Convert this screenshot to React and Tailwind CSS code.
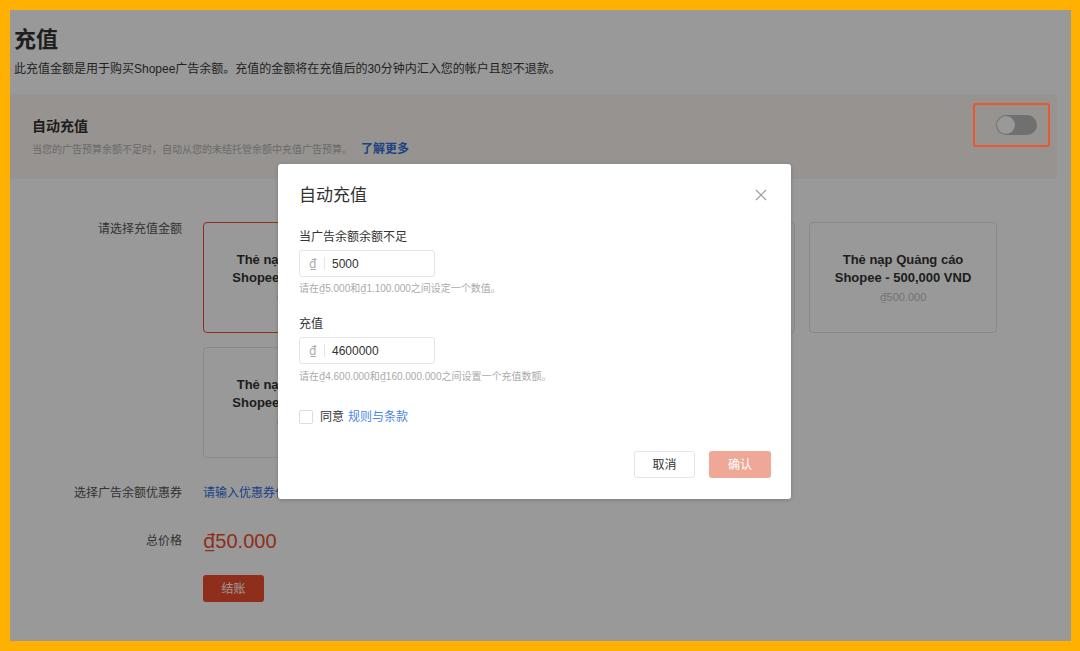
import React from 'react';

const cards = [
    { title: 'Thẻ nạp Quảng cáo Shopee - 50,000 VND', price: '50.000', active: true },
    { title: 'Thẻ nạp Quảng cáo Shopee - 100,000 VND', price: '100.000' },
    { title: 'Thẻ nạp Quảng cáo Shopee - 200,000 VND', price: '200.000' },
    { title: 'Thẻ nạp Quảng cáo Shopee - 500,000 VND', price: '500.000' },
    { title: 'Thẻ nạp Quảng cáo Shopee - 10,000 VND', price: '10.000' },
];

// ₫ from Noto Sans: full-height d with underline like the reference
const Dong = () => <span className="font-['Noto_Sans',sans-serif] leading-none">₫</span>;

function MoneyInput({ value }) {
    return (
        <div className="flex h-[27px] w-[136px] items-center rounded-[3px] border border-[#e5e5e5] bg-white">
            <span className="w-[24px] pl-[9px] text-[12px] leading-[16px] text-[#aaa]">
                <Dong />
            </span>
            <span className="h-[13px] w-px bg-[#e5e5e5]" />
            <span className="pl-[7px] text-[12px] leading-[16px] text-[#333]">{value}</span>
        </div>
    );
}

export default function App() {
    return (
        <div className="h-[651px] w-[1080px] bg-[#FFB000] pb-[10px] pl-[10px] pr-[9px] pt-[10px] font-['Liberation_Sans','Noto_Sans_CJK_SC',sans-serif]">
            <div className="relative h-full w-full overflow-hidden bg-white">
                {/* page */}
                <div className="pl-[4px] pt-[16px]">
                    <h1 className="text-[22px] font-bold leading-[28px] text-[#333]">充值</h1>
                    <p className="mt-[6px] text-[12px] leading-[18px] text-[#3a3a3a]">
                        此充值金额是用于购买Shopee广告余额。充值的金额将在充值后的30分钟内汇入您的帐户且恕不退款。
                    </p>
                </div>

                <div className="mt-[16px] flex h-[85px] w-[1047px] items-start justify-between bg-[#FCF5F0] pl-[22px] pr-[20px]">
                    <div className="pt-[22px]">
                        <div className="text-[14px] font-bold leading-[20px] text-[#333]">自动充值</div>
                        <div className="mt-[5px] text-[10px] leading-[16px] text-[#b0b0b0]">
                            当您的广告预算余额不足时，自动从您的未结托管余额中充值广告预算。
                            <span className="ml-[9px] text-[12px] font-bold text-[#2F6FDB]">了解更多</span>
                        </div>
                    </div>
                    <div className="mt-[21px] flex h-[20px] w-[41px] items-center rounded-full bg-[#bbb] pl-[1px]">
                        <span className="h-[18px] w-[18px] rounded-full bg-white" />
                    </div>
                </div>

                <div className="mt-[43px] flex">
                    <div className="mt-[1px] w-[172px] text-right text-[12px] leading-[12px] text-[#555]">请选择充值金额</div>
                    <div className="ml-[21px] grid w-[794px] grid-cols-4 gap-[14px]">
                        {cards.map((c) => (
                            <div
                                key={c.title}
                                className={`flex h-[111px] flex-col items-center justify-center rounded-[4px] border px-[14px] text-center ${
                                    c.active ? 'border-[#EE4D2D]' : 'border-[#e5e5e5]'
                                }`}
                            >
                                <div className="text-[13px] font-bold leading-[18px] text-[#333]">{c.title}</div>
                                <div className="mt-[2px] h-[16px] text-[11px] leading-[16px] text-[#c0c0c0]">
                                    <Dong />
                                    {c.price}
                                </div>
                            </div>
                        ))}
                    </div>
                </div>

                <div className="mt-[27px] flex items-center">
                    <div className="w-[172px] text-right text-[12px] leading-[16px] text-[#555]">选择广告余额优惠券</div>
                    <div className="ml-[21px] text-[12px] leading-[16px] text-[#2F6FDB]">请输入优惠券代码</div>
                </div>

                <div className="mt-[26px] flex items-center">
                    <div className="w-[172px] text-right text-[12px] leading-[16px] text-[#555]">总价格</div>
                    <div className="ml-[21px] h-[28px] text-[20px] leading-[28px] text-[#EE4D2D]">
                        <Dong />
                        50.000
                    </div>
                </div>

                <div className="ml-[193px] mt-[20px] flex h-[27px] w-[61px] items-center justify-center rounded-[3px] bg-[#EE4D2D] text-[12px] text-white">
                    结账
                </div>

                {/* overlay + modal */}
                <div className="absolute inset-0 flex items-start justify-center bg-black/40 pr-[12px] pt-[154px]">
                    <div className="h-[335px] w-[513px] rounded-[3px] bg-white pl-[21px] pr-[20px] pt-[20px] shadow-[0_1px_4px_rgba(0,0,0,0.2)]">
                        <div className="flex items-start justify-between">
                            <div className="text-[17px] font-normal leading-[24px] text-[#333]">自动充值</div>
                            <svg width="12" height="12" viewBox="0 0 12 12" className="mr-[4px] mt-[5px]">
                                <path d="M1 1L11 11M11 1L1 11" stroke="#999" strokeWidth="1.1" />
                            </svg>
                        </div>

                        <div className="mt-[20px] text-[12px] leading-[18px] text-[#333]">当广告余额余额不足</div>
                        <div className="mt-[4px]">
                            <MoneyInput value="5000" />
                        </div>
                        <div className="mt-[5px] h-[14px] text-[10px] leading-[14px] text-[#aaa]">
                            请在<Dong />5.000和<Dong />1.100.000之间设定一个数值。
                        </div>

                        <div className="mt-[19px] text-[12px] leading-[18px] text-[#333]">充值</div>
                        <div className="mt-[4px]">
                            <MoneyInput value="4600000" />
                        </div>
                        <div className="mt-[6px] h-[14px] text-[10px] leading-[14px] text-[#aaa]">
                            请在<Dong />4.600.000和<Dong />160.000.000之间设置一个充值数额。
                        </div>

                        <div className="mt-[24px] flex items-center">
                            <span className="h-[14px] w-[14px] rounded-[2px] border border-[#ddd] bg-white" />
                            <span className="ml-[7px] text-[12px] leading-[18px] text-[#333]">同意</span>
                            <span className="ml-[4px] text-[12px] leading-[18px] text-[#4A86E8]">规则与条款</span>
                        </div>

                        <div className="mt-[25px] flex justify-end gap-[14px]">
                            <div className="flex h-[27px] w-[61px] items-center justify-center rounded-[3px] border border-[#e5e5e5] text-[12px] text-[#333]">
                                取消
                            </div>
                            <div className="flex h-[27px] w-[62px] items-center justify-center rounded-[3px] bg-[#EFA797] text-[12px] text-white">
                                确认
                            </div>
                        </div>
                    </div>
                </div>

                {/* annotation box */}
                <div className="absolute left-[963px] top-[93px] h-[44px] w-[77px] rounded-[3px] border-2 border-[#E8572D]" />
            </div>
        </div>
    );
}
